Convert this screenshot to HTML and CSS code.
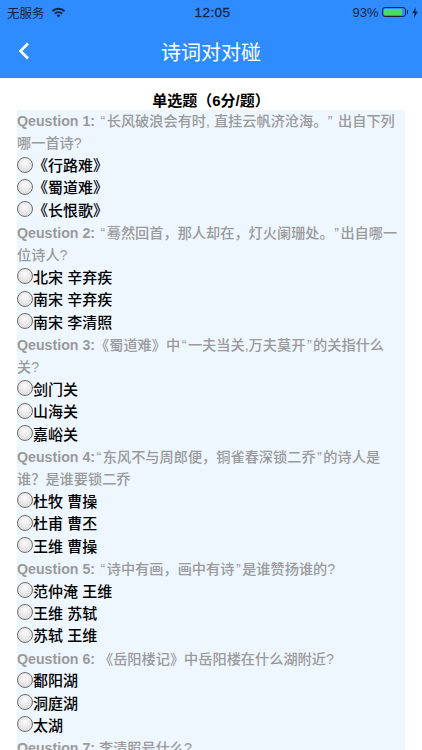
FILE: index.html
```html
<!DOCTYPE html>
<html lang="en">
<head>
    <meta charset="UTF-8">
    <meta name="viewport" content="width=device-width, initial-scale=1.0">
    <title>诗词对对碰</title>
    <link rel="stylesheet" href="styles.css">
</head>
<body>

    <header class="app-header">
        <div class="status-bar">
            <div class="status-left">
                <span>无服务</span>
                <svg class="wifi" width="15" height="11" viewBox="0 0 16 12">
                    <path d="M0.6 3.9 A10.6 10.6 0 0 1 15.4 3.9 L13.9 5.5 A8.4 8.4 0 0 0 2.1 5.5 Z" fill="#14233f"/>
                    <path d="M3.2 6.6 A6.9 6.9 0 0 1 12.8 6.6 L11.3 8.2 A4.8 4.8 0 0 0 4.7 8.2 Z" fill="#14233f"/>
                    <path d="M5.8 9.2 A3.2 3.2 0 0 1 10.2 9.2 L8 11.5 Z" fill="#14233f"/>
                </svg>
            </div>
            <div class="status-time">12:05</div>
            <div class="status-right">
                <span>93%</span>
                <span class="battery"><span class="battery-level"></span></span>
                <span class="battery-tip"></span>
                <svg class="bolt" width="6" height="11" viewBox="0 0 6 11">
                    <path d="M3.8 0 L0.2 6.2 L2.6 6.2 L2 11 L5.8 4.4 L3.3 4.4 Z" fill="#14233f"/>
                </svg>
            </div>
        </div>
        <div class="nav-bar">
            <svg class="back" width="12" height="18" viewBox="0 0 12 18">
                <path d="M10 1.5 L2.5 9 L10 16.5" fill="none" stroke="#fff" stroke-width="2.6"/>
            </svg>
            <h1>诗词对对碰</h1>
        </div>
    </header>

    <main class="content">
        <h2>单选题（6分/题）</h2>
        <div class="quiz">
            <p class="question"><b>Qeustion 1:</b> <span class="quote">“</span>长风破浪会有时, 直挂云帆济沧海。<span class="quote quote-gap">”</span> 出自下列<br>哪一首诗?</p>
            <label class="option"><input type="radio" name="q1">《行路难》</label>
            <label class="option"><input type="radio" name="q1">《蜀道难》</label>
            <label class="option"><input type="radio" name="q1">《长恨歌》</label>

            <p class="question"><b>Qeustion 2:</b> <span class="quote">“</span>蓦然回首，那人却在，灯火阑珊处。<span class="quote quote-gap">”</span>出自哪一<br>位诗人?</p>
            <label class="option"><input type="radio" name="q2">北宋 辛弃疾</label>
            <label class="option"><input type="radio" name="q2">南宋 辛弃疾</label>
            <label class="option"><input type="radio" name="q2">南宋 李清照</label>

            <p class="question"><b>Qeustion 3:</b>《蜀道难》中<span class="quote">“</span>一夫当关,万夫莫开<span class="quote">”</span>的关指什么<br>关?</p>
            <label class="option"><input type="radio" name="q3">剑门关</label>
            <label class="option"><input type="radio" name="q3">山海关</label>
            <label class="option"><input type="radio" name="q3">嘉峪关</label>

            <p class="question"><b>Qeustion 4:</b><span class="quote">“</span>东风不与周郎便，铜雀春深锁二乔<span class="quote">”</span>的诗人是<br>谁？是谁要锁二乔</p>
            <label class="option"><input type="radio" name="q4">杜牧 曹操</label>
            <label class="option"><input type="radio" name="q4">杜甫 曹丕</label>
            <label class="option"><input type="radio" name="q4">王维 曹操</label>

            <p class="question"><b>Qeustion 5:</b> <span class="quote">“</span>诗中有画，画中有诗<span class="quote">”</span>是谁赞扬谁的?</p>
            <label class="option"><input type="radio" name="q5">范仲淹 王维</label>
            <label class="option"><input type="radio" name="q5">王维 苏轼</label>
            <label class="option"><input type="radio" name="q5">苏轼 王维</label>

            <p class="question"><b>Qeustion 6:</b> 《岳阳楼记》中岳阳楼在什么湖附近?</p>
            <label class="option"><input type="radio" name="q6">鄱阳湖</label>
            <label class="option"><input type="radio" name="q6">洞庭湖</label>
            <label class="option"><input type="radio" name="q6">太湖</label>

            <p class="question"><b>Qeustion 7:</b> 李清照号什么?</p>
        </div>
    </main>

</body>
</html>
```

FILE: styles.css
```css
html, body {
    margin: 0;
    padding: 0;
    height: 100%;
    overflow: hidden;
    background-color: white;
    font-family: "Liberation Sans", "Noto Sans CJK SC", sans-serif;
}

/* Header */
.app-header {
    height: 78px;
    background-color: #2e8cff;
    color: white;
}

.status-bar {
    display: grid;
    grid-template-columns: 1fr auto 1fr;
    align-items: center;
    height: 24px;
    padding: 0 4px 0 7px;
    font-size: 12.5px;
    color: #14233f;
}

.status-left {
    display: flex;
    align-items: center;
    gap: 6px;
}

.status-right {
    display: flex;
    align-items: center;
    justify-content: flex-end;
    font-size: 13px;
}

.status-time {
    font-size: 13.5px;
    letter-spacing: 0.4px;
    -webkit-text-stroke: 0.3px #14233f;
}

.battery {
    display: block;
    width: 20px;
    height: 6px;
    margin-left: 3px;
    padding: 1px;
    border: 1px solid #14233f;
    border-radius: 3px;
}

.battery-level {
    display: block;
    width: 93%;
    height: 100%;
    background-color: #4cd964;
    border-radius: 1px;
}

.battery-tip {
    display: block;
    width: 1.5px;
    height: 4px;
    margin-left: 1px;
    background-color: #14233f;
}

.bolt {
    margin-left: 4px;
}

.nav-bar {
    position: relative;
    display: flex;
    align-items: center;
    justify-content: center;
    height: 54px;
}

.nav-bar h1 {
    margin: 0;
    font-size: 20px;
    font-weight: normal;
}

.back {
    position: absolute;
    left: 18px;
    top: 18px;
}

/* Quiz */
.content {
    padding: 14px 17px 0;
}

.content h2 {
    margin: 0;
    font-size: 15px;
    line-height: 18px;
    text-align: center;
    color: #000;
}

.quiz {
    background-color: #eef6ff;
    height: 660px;
}

.question {
    margin: 0;
    font-size: 14.2px;
    font-weight: 500;
    line-height: 22.4px;
    color: #9a9a9a;
}

.quote {
    padding: 0 1.5px;
}

.quote-gap {
    padding-left: 7.5px;
}

.option {
    display: flex;
    align-items: center;
    height: 22.4px;
    padding-bottom: 3px;
    box-sizing: border-box;
    font-size: 15px;
    font-weight: 500;
    color: #000;
}

.option input {
    appearance: none;
    flex: none;
    width: 16px;
    height: 16px;
    margin: 0;
    border: 1px solid #6f6f6f;
    border-radius: 50%;
    background: radial-gradient(circle at 50% 35%, #fbfbfb, #d4d4d4);
}
```
